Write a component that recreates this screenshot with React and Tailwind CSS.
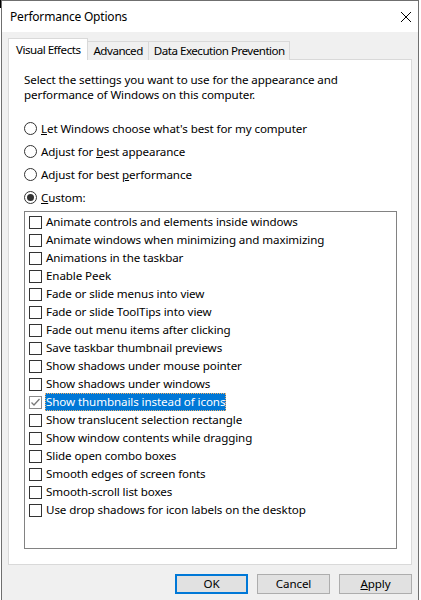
import React from 'react';

const effects = [
  'Animate controls and elements inside windows',
  'Animate windows when minimizing and maximizing',
  'Animations in the taskbar',
  'Enable Peek',
  'Fade or slide menus into view',
  'Fade or slide ToolTips into view',
  'Fade out menu items after clicking',
  'Save taskbar thumbnail previews',
  'Show shadows under mouse pointer',
  'Show shadows under windows',
  'Show thumbnails instead of icons',
  'Show translucent selection rectangle',
  'Show window contents while dragging',
  'Slide open combo boxes',
  'Smooth edges of screen fonts',
  'Smooth-scroll list boxes',
  'Use drop shadows for icon labels on the desktop',
];

const Radio = ({ checked, children }) => (
  <div className="flex items-center h-[23px]">
    <span className="w-[13px] h-[13px] rounded-full border border-[#333] bg-white flex items-center justify-center">
      {checked && <span className="w-[7px] h-[7px] rounded-full bg-[#333]" />}
    </span>
    <span className="ml-[4px]">{children}</span>
  </div>
);

const Check = ({ label, checked, selected }) => (
  <div className="flex items-center h-[18px]">
    <span
      className={
        'w-[13px] h-[13px] border bg-white flex items-center justify-center ml-[4px] ' +
        (checked ? 'border-[#8a8a8a]' : 'border-[#333]')
      }
    >
      {checked && (
        <svg width="11" height="11" viewBox="0 0 11 11">
          <path d="M1.5 5.5 L4 8 L9.5 2" fill="none" stroke="#7a7a7a" strokeWidth="1.3" />
        </svg>
      )}
    </span>
    <span
      className={
        'ml-[3px] px-[1px] h-[18px] leading-[18px] ' +
        (selected ? 'bg-[#0078d7] text-white outline outline-1 outline-dotted outline-[#f3b26b] -outline-offset-1' : '')
      }
    >
      {label}
    </span>
  </div>
);

const Btn = ({ children, primary }) => (
  <button
    className={
      'w-[73px] h-[20px] bg-[#e1e1e1] leading-none text-black ' +
      (primary ? 'border-2 border-[#0078d7]' : 'border border-[#adadad]')
    }
  >
    {children}
  </button>
);

export default function App() {
  return (
    <div
      className="w-[421px] h-[600px] bg-white relative overflow-hidden text-[11.6px] tracking-[-0.1px] text-black"
      style={{ fontFamily: '"Noto Sans", "Open Sans", sans-serif' }}
    >
      <div className="absolute left-0 top-0 w-[7px] h-[8px] bg-black" />
      <div className="ml-[1px] w-[418px] h-[600px] border-l border-t border-r border-[#6f6f6f] flex flex-col relative">
        {/* title bar */}
        <div className="h-[31px] bg-white flex items-center justify-between pl-[8px] pr-[6px]">
          <span className="text-[12px] tracking-[-0.2px]">Performance Options</span>
          <svg width="12" height="12" viewBox="0 0 12 12">
            <path d="M1 1 L11 11 M11 1 L1 11" stroke="#000" strokeWidth="1" />
          </svg>
        </div>

        {/* body */}
        <div className="flex-1 bg-[#f0f0f0] pt-[6px] px-[6px]">
          <div className="flex items-end h-[22px] relative z-10 tracking-[-0.5px]">
            <div className="h-[22px] pl-[7px] pr-[7px] bg-white border-t border-l border-r border-[#d9d9d9] flex items-center">
              Visual Effects
            </div>
            <div className="h-[19px] pl-[5px] pr-[5px] bg-[#f0f0f0] border-t border-r border-[#d9d9d9] flex items-center">
              Advanced
            </div>
            <div className="h-[19px] pl-[5px] pr-[4px] bg-[#f0f0f0] border-t border-r border-[#d9d9d9] flex items-center">
              Data Execution Prevention
            </div>
          </div>
          <div className="-mt-[1px] w-[404px] h-[506px] bg-white border border-[#d9d9d9] pl-[15px] pr-[14px] pt-[12px]">
            <p className="leading-[15px]">
              Select the settings you want to use for the appearance and
              <br />
              performance of Windows on this computer.
            </p>
            <div className="mt-[15px]">
              <Radio>
                <span className="underline">L</span>et Windows choose what's best for my computer
              </Radio>
              <Radio>
                Adjust for <span className="underline">b</span>est appearance
              </Radio>
              <Radio>
                Adjust for best <span className="underline">p</span>erformance
              </Radio>
              <Radio checked>
                <span className="underline">C</span>ustom:
              </Radio>
            </div>
            <div className="mt-[2px] h-[338px] border border-[#828282] pt-[1px]">
              {effects.map((e, i) => (
                <Check key={i} label={e} checked={i === 10} selected={i === 10} />
              ))}
            </div>
          </div>
          <div className="flex justify-end gap-[9px] mt-[9px]">
            <Btn primary>OK</Btn>
            <Btn>Cancel</Btn>
            <Btn>
              <span className="underline">A</span>pply
            </Btn>
          </div>
        </div>
      </div>
    </div>
  );
}
